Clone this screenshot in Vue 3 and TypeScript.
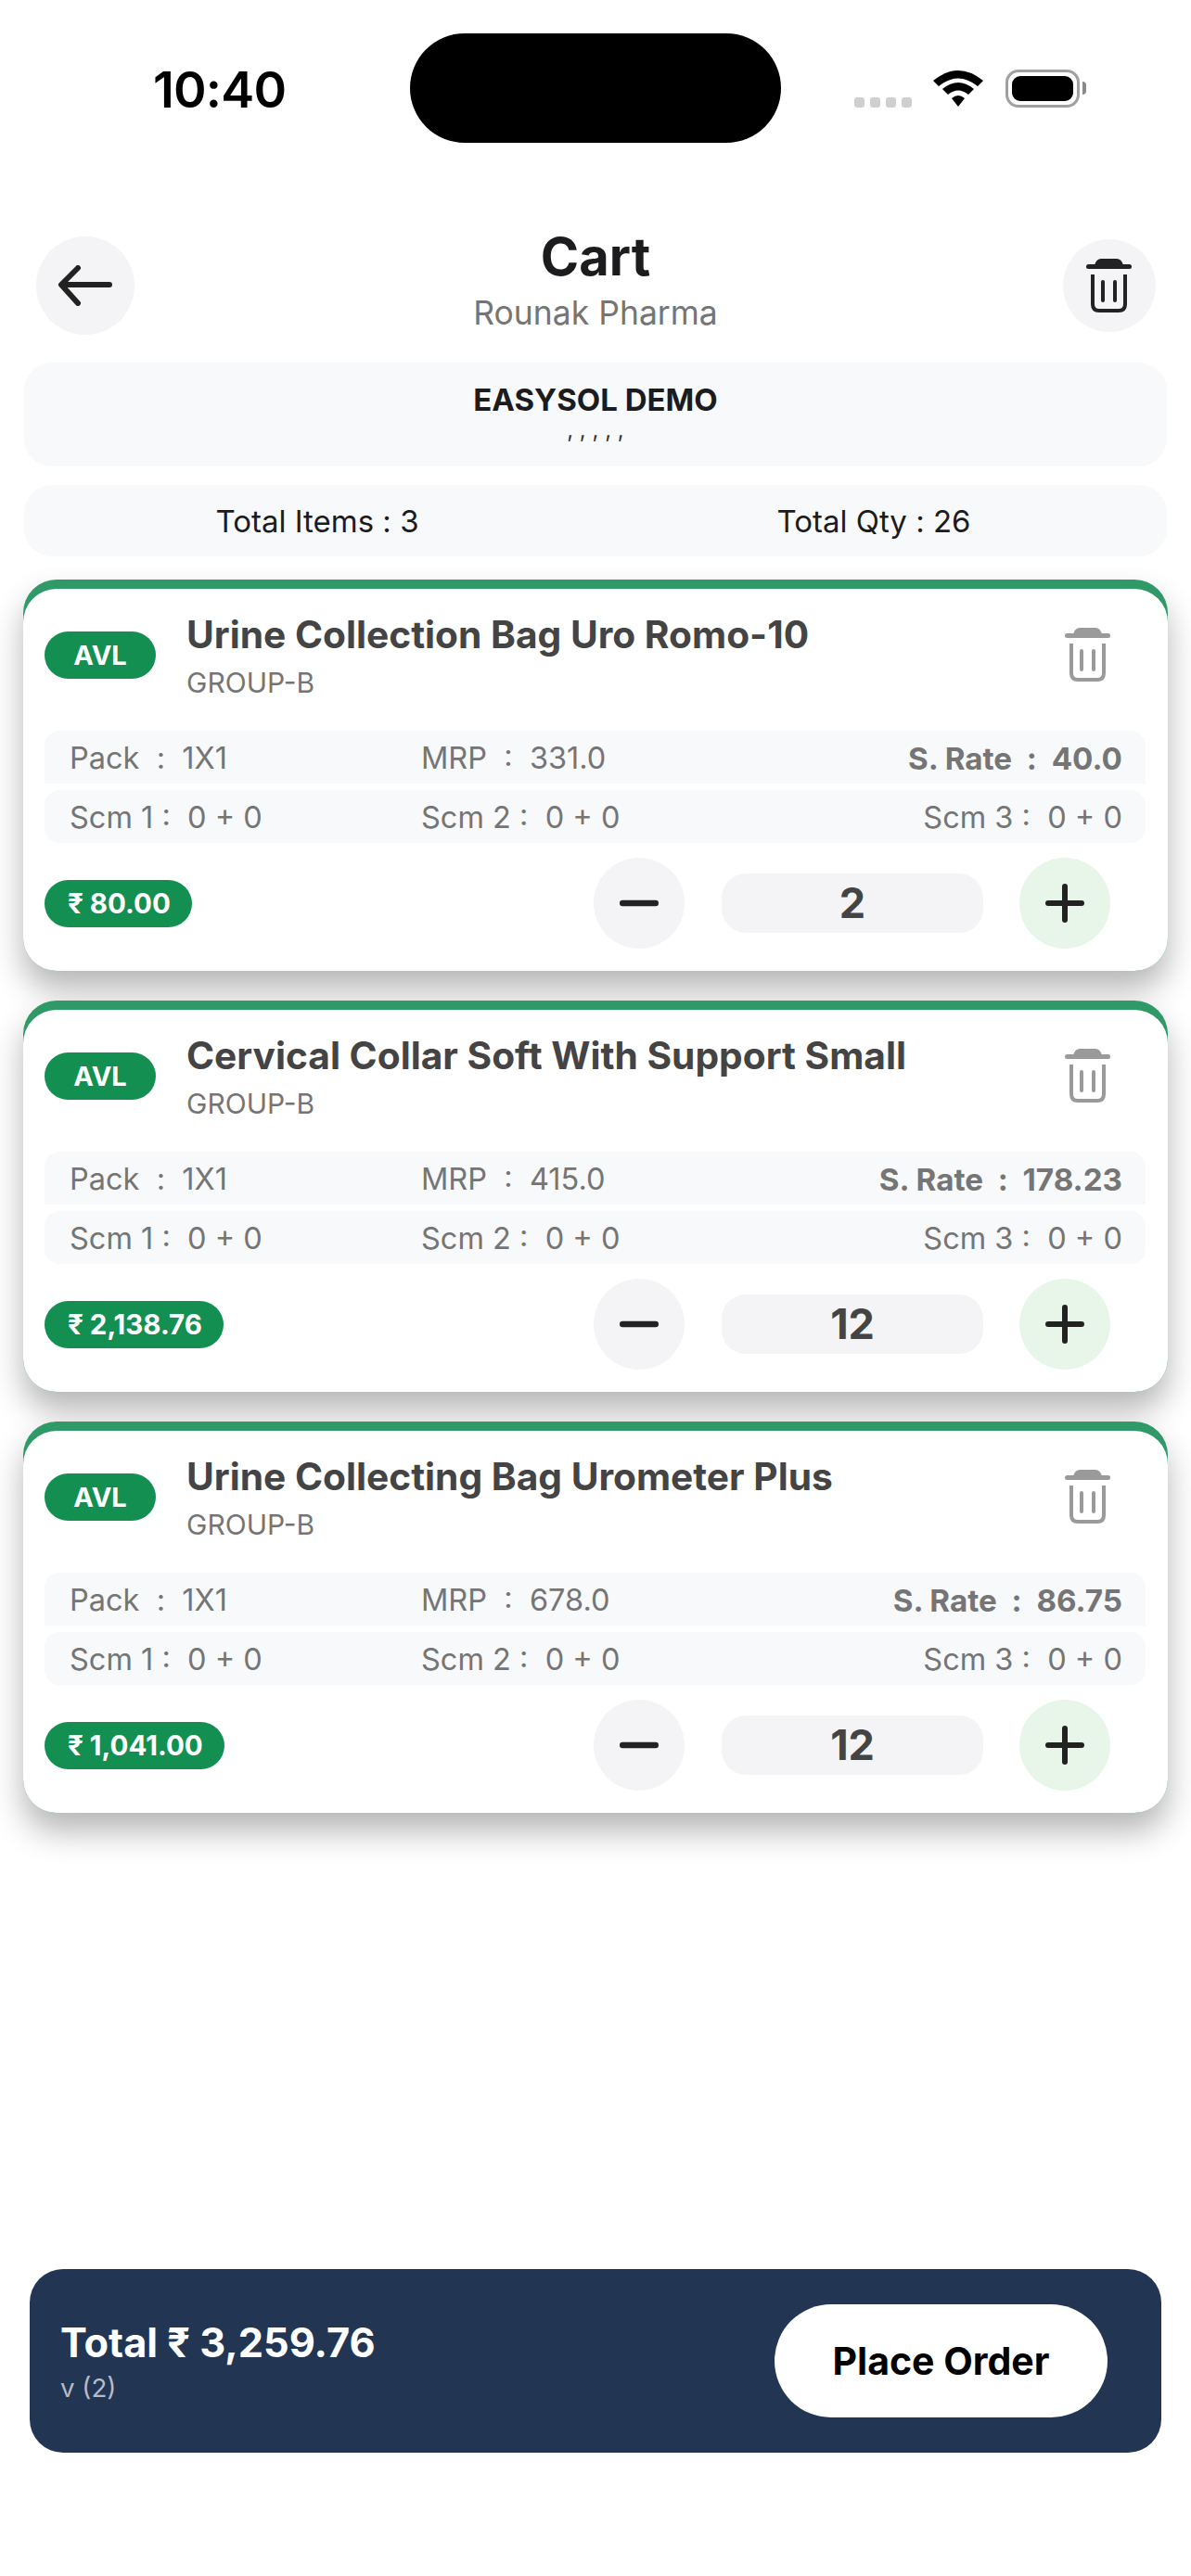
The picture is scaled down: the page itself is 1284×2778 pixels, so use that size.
<script setup lang="ts">
interface Item { name: string; pack: string; mrp: string; rate: string; qty: number; amount: string }
const items: Item[] = [
  { name: 'Urine Collection Bag Uro Romo-10', pack: '1X1', mrp: '331.0', rate: '40.0', qty: 2, amount: '₹ 80.00' },
  { name: 'Cervical Collar Soft With Support Small', pack: '1X1', mrp: '415.0', rate: '178.23', qty: 12, amount: '₹ 2,138.76' },
  { name: 'Urine Collecting Bag Urometer Plus', pack: '1X1', mrp: '678.0', rate: '86.75', qty: 12, amount: '₹ 1,041.00' },
]
</script>

<template>
  <div class="page">
    <div class="status">
      <div class="time">10:40</div>
      <div class="island"></div>
      <div class="sys">
        <div class="dots"><i></i><i></i><i></i><i></i></div>
        <svg class="wifi" width="54" height="40" viewBox="0 0 54 40">
          <path d="M0 12 Q27 -10 54 12 L48 18 Q27 1 6 18 Z" fill="#000"/>
          <path d="M10 21 Q27 7 44 21 L38 27 Q27 18 16 27 Z" fill="#000"/>
          <path d="M20 31 Q27 25 34 31 L27 40 Z" fill="#000"/>
        </svg>
        <div class="batt"><div class="batt-in"></div></div>
        <div class="batt-cap"></div>
      </div>
    </div>

    <header class="head">
      <button class="round back">
        <svg width="60" height="44" viewBox="0 0 60 44" fill="none" stroke="#222" stroke-width="6" stroke-linecap="round" stroke-linejoin="round">
          <path d="M56 21 H5 M22 3 L4 21 L22 41"/>
        </svg>
      </button>
      <div class="head-text">
        <div class="title">Cart</div>
        <div class="sub">Rounak Pharma</div>
      </div>
      <button class="round bin">
        <svg width="50" height="58" viewBox="0 0 50 58" fill="#222">
          <path d="M9 7 Q11 0 16 0 H33 Q38 0 40 7 Z"/>
          <rect x="0" y="6" width="49" height="5" rx="2.5"/>
          <path d="M7 17 V49 Q7 56 14 56 H35 Q42 56 42 49 V17" fill="none" stroke="#222" stroke-width="4"/>
          <rect x="16" y="23" width="4" height="24" rx="2"/>
          <rect x="29" y="23" width="4" height="24" rx="2"/>
        </svg>
      </button>
    </header>

    <section class="customer">
      <div class="cname">EASYSOL DEMO</div>
      <div class="caddr">, , , , ,</div>
    </section>

    <section class="summary">
      <span>Total Items : 3</span>
      <span>Total Qty : 26</span>
    </section>

    <div class="list">
      <article v-for="it in items" :key="it.name" class="card">
        <div class="card-in">
          <div class="top">
            <span class="avl">AVL</span>
            <div class="info">
              <div class="name">{{ it.name }}</div>
              <div class="group">GROUP-B</div>
            </div>
            <svg class="del" width="50" height="58" viewBox="0 0 50 58" fill="#9a9a9a">
              <path d="M9 7 Q11 0 16 0 H33 Q38 0 40 7 Z"/>
              <rect x="0" y="6" width="49" height="5" rx="2.5"/>
              <path d="M7 17 V49 Q7 56 14 56 H35 Q42 56 42 49 V17" fill="none" stroke="#9a9a9a" stroke-width="4"/>
              <rect x="16" y="23" width="4" height="24" rx="2"/>
              <rect x="29" y="23" width="4" height="24" rx="2"/>
            </svg>
          </div>
          <div class="row first">
            <span class="c1 plain">Pack &nbsp;:&nbsp; {{ it.pack }}</span>
            <span class="c2">MRP &nbsp;:&nbsp; {{ it.mrp }}</span>
            <span class="c3 strong plain">S. Rate &nbsp;:&nbsp; {{ it.rate }}</span>
          </div>
          <div class="row">
            <span class="c1">Scm 1 :&nbsp; 0 + 0</span>
            <span class="c2">Scm 2 :&nbsp; 0 + 0</span>
            <span class="c3">Scm 3 :&nbsp; 0 + 0</span>
          </div>
          <div class="bottom">
            <span class="amount">{{ it.amount }}</span>
            <div class="stepper">
              <button class="step minus">
                <svg width="42" height="8" viewBox="0 0 42 8"><rect width="42" height="6.5" y="0.75" rx="3.25" fill="#222"/></svg>
              </button>
              <div class="qty">{{ it.qty }}</div>
              <button class="step plus">
                <svg width="42" height="42" viewBox="0 0 42 42" fill="#222"><rect y="18" width="42" height="6" rx="3"/><rect x="18" width="6" height="42" rx="3"/></svg>
              </button>
            </div>
          </div>
        </div>
      </article>
    </div>

    <footer class="foot">
      <div>
        <div class="total">Total ₹ 3,259.76</div>
        <div class="ver">v (2)</div>
      </div>
      <button class="order">Place Order</button>
    </footer>
  </div>
</template>

<style>
html, body { margin: 0; background: #fff; }
</style>

<style scoped>
.page {
  width: 1284px;
  height: 2778px;
  box-sizing: border-box;
  display: flex;
  flex-direction: column;
  font-family: Inter, "Noto Sans", sans-serif;
  background: #fff;
  overflow: hidden;
}
button { border: 0; padding: 0; font-family: inherit; cursor: pointer; }

.status {
  height: 255px;
  box-sizing: border-box;
  padding: 36px 0 0 165px;
  display: flex;
  align-items: flex-start;
  flex: none;
}
.time { width: 277px; font-size: 54px; font-weight: 600; line-height: 60px; margin-top: 31px; color: #000; letter-spacing: -0.8px; }
.island { width: 400px; height: 118px; border-radius: 59px; background: #000; }
.sys { display: flex; align-items: flex-start; margin-left: 79px; margin-top: 39px; }
.dots { display: flex; gap: 6px; margin-top: 30px; }
.dots i { width: 11px; height: 11px; border-radius: 3px; background: #cfcfcf; display: block; }
.wifi { margin-left: 23px; }
.batt { margin-left: 24px; width: 80px; height: 41px; box-sizing: border-box; border: 3px solid #a0a0a0; border-radius: 14px; padding: 4px; }
.batt-in { width: 100%; height: 100%; border-radius: 9px; background: #000; }
.batt-cap { width: 4px; height: 14px; margin: 13px 0 0 3px; background: #8a8a8a; border-radius: 0 7px 7px 0; }

.head { display: flex; align-items: center; justify-content: space-between; padding: 0 38px 0 39px; height: 106px; flex: none; }
.round { border-radius: 50%; background: #f4f4f6; display: flex; align-items: center; justify-content: center; flex: none; }
.back { width: 106px; height: 106px; }
.bin { width: 100px; height: 100px; }
.head-text { text-align: center; margin: -10px 7px 0 0; }
.title { font-size: 56px; font-weight: 700; line-height: 60px; color: #1c1c1e; }
.sub { font-size: 35.5px; line-height: 42px; margin-top: 10px; color: #757575; }

.customer {
  margin: 30px 26px 0;
  height: 112px;
  border-radius: 30px;
  background: #f8f9fb;
  text-align: center;
  flex: none;
}
.cname { padding-top: 22px; font-size: 33px; line-height: 36px; font-weight: 700; color: #1c1c1e; }
.caddr { font-size: 24px; line-height: 26px; margin-top: 2px; color: #333; }

.summary {
  margin: 20px 26px 0;
  height: 77px;
  padding: 0 16px;
  border-radius: 30px;
  background: #f8f9fb;
  display: grid;
  grid-template-columns: 1fr 1fr;
  align-items: center;
  justify-items: center;
  font-size: 33px;
  font-feature-settings: "calt" 0;
  color: #1c1c1e;
  flex: none;
}

.list { display: flex; flex-direction: column; gap: 32px; margin: 25px 25px 0; flex: none; }
.card {
  height: 422px;
  box-sizing: border-box;
  padding-top: 10px;
  border-radius: 36px;
  background: #2f9a68;
  box-shadow: 0 20px 34px rgba(0, 0, 0, .29);
}
.card-in {
  height: 412px;
  box-sizing: border-box;
  padding: 0 24px 0 23px;
  background: #fff;
  border-radius: 36px;
  display: flex;
  flex-direction: column;
}
.top { display: flex; align-items: flex-start; height: 153px; flex: none; }
.avl {
  margin-top: 46px;
  width: 120px;
  height: 51px;
  border-radius: 26px;
  background: #148f52;
  color: #fff;
  font-size: 29px;
  font-weight: 700;
  line-height: 51px;
  text-align: center;
  flex: none;
}
.info { margin-left: 33px; flex: 1; padding-top: 27px; }
.name { font-size: 40.7px; font-weight: 700; line-height: 46px; color: #444; white-space: nowrap; }
.group { font-size: 30px; line-height: 34px; margin-top: 11px; color: #757575; }
.del { margin: 42px 37px 0 0; flex: none; }

.row {
  height: 57px;
  margin-bottom: 7px;
  border-radius: 16px;
  background: #f8f9fb;
  display: flex;
  align-items: center;
  padding: 2px 25px 0 27px;
  box-sizing: border-box;
  font-size: 32.5px;
  color: #757575;
  flex: none;
}
.first { border-radius: 16px 16px 0 0; }
.c1 { width: 379px; }
.c2 { flex: 1; }
.strong { font-weight: 700; font-size: 33.2px; }
.plain { font-feature-settings: "calt" 0; }

.bottom { display: flex; align-items: center; justify-content: space-between; margin-top: 9px; padding-right: 38px; }
.amount {
  height: 51px;
  padding: 0 23px 0 25px;
  border-radius: 26px;
  background: #148f52;
  color: #fff;
  font-size: 29.5px;
  font-weight: 700;
  line-height: 51px;
}
.stepper { display: flex; align-items: center; gap: 40px; }
.step { width: 98px; height: 98px; border-radius: 50%; display: flex; align-items: center; justify-content: center; }
.minus { background: #f4f4f6; }
.plus { background: #e8f5e9; margin-left: -1px; }
.qty {
  width: 282px;
  height: 64px;
  border-radius: 26px;
  background: #f4f4f6;
  text-align: center;
  font-size: 45px;
  font-weight: 700;
  line-height: 64px;
  color: #444;
}

.foot {
  margin: auto 32px 133px;
  height: 198px;
  box-sizing: border-box;
  padding: 0 58px 0 33px;
  border-radius: 36px;
  background: #223654;
  display: flex;
  align-items: center;
  justify-content: space-between;
  flex: none;
}
.total { font-size: 43.3px; line-height: 50px; font-weight: 700; color: #fff; }
.ver { font-size: 27.7px; line-height: 32px; margin-top: 8px; color: #b4bcc8; }
.order {
  width: 359px;
  height: 122px;
  border-radius: 61px;
  background: #fff;
  color: #000;
  font-size: 41px;
  font-weight: 700;
}
</style>
